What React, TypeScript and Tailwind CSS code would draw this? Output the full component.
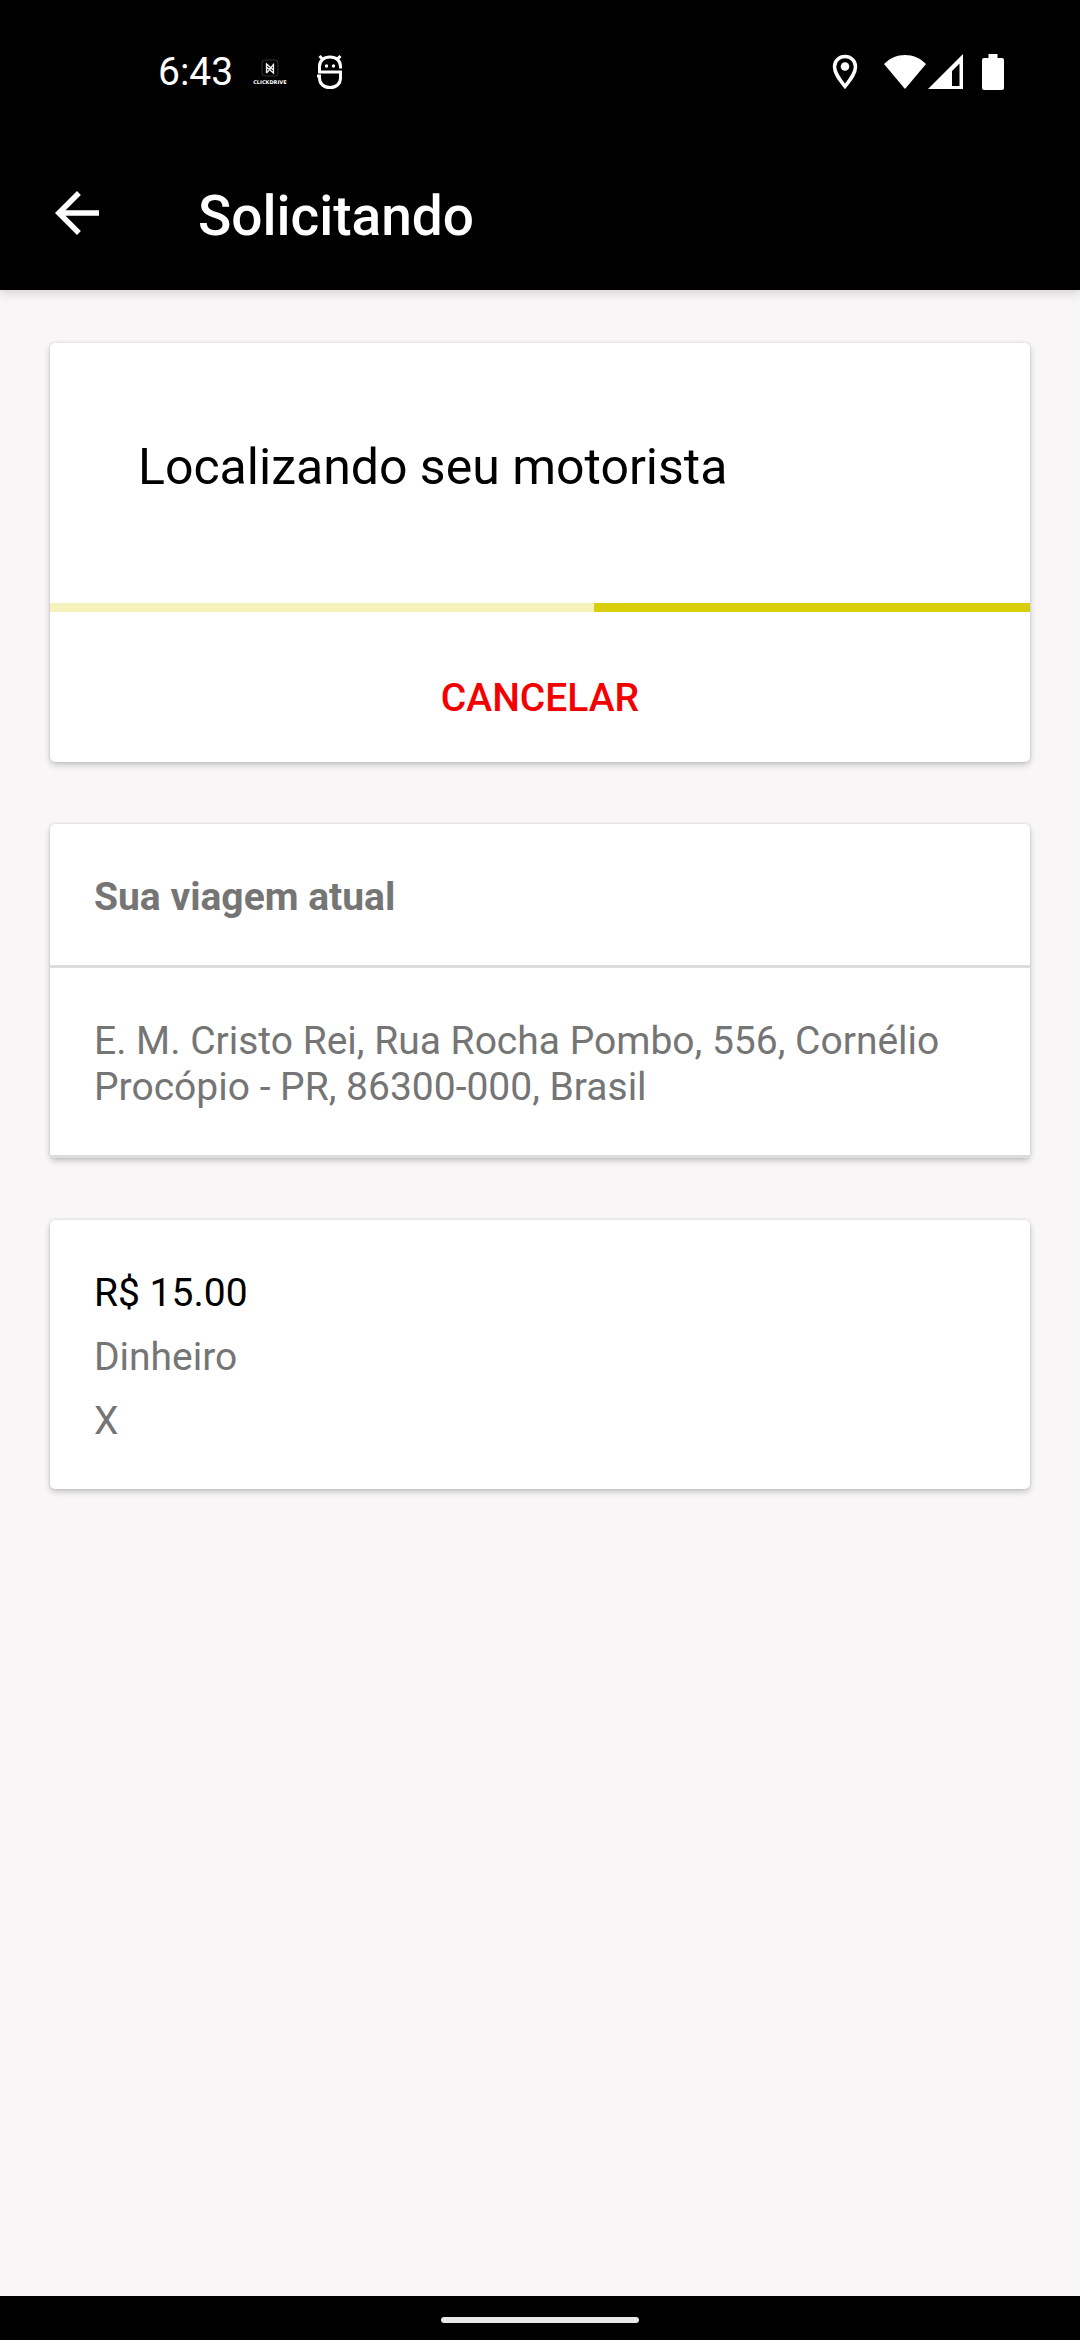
import React from 'react';

const tripAddress = 'E. M. Cristo Rei, Rua Rocha Pombo, 556, Cornélio Procópio - PR, 86300-000, Brasil';

const paymentDetails = ['Dinheiro', 'X'];

interface CardProps {
  children: React.ReactNode;
}

const Card: React.FC<CardProps> = ({ children }) => (
  <section className="bg-white rounded-[5px] overflow-hidden shadow-[0_3px_6px_rgba(0,0,0,0.2),0_0_3px_rgba(0,0,0,0.12)]">
    {children}
  </section>
);

const StatusBar: React.FC = () => (
  <div className="flex items-center justify-between h-[136px] pt-2 pl-[158px] pr-[76px] text-white">
    <div className="flex items-center">
      <span className="leading-[46px]">6:43</span>

      {/* Clickdrive notification */}
      <div className="flex flex-col items-center ml-5">
        <svg className="w-[18px] h-[18px]" viewBox="0 0 18 18" fill="none">
          <rect x="1" y="1" width="16" height="16" rx="3" stroke="#333" strokeWidth="1" />
          <path d="M5.5 14V5l7 6V4.5M5.5 14l7-8.5M5.5 5v3l7 6v-3" stroke="#eee" strokeWidth="1.3" />
        </svg>
        <span className="mt-0.5 text-[5px] leading-[6px] font-bold font-['DejaVu_Sans']">CLICKDRIVE</span>
      </div>

      <svg className="w-[26px] h-9 ml-[30px]" viewBox="0 0 26 36" fill="none" stroke="#fff" strokeWidth="3">
        <path d="M2.5 2l4 4M23.5 2l-4 4" />
        <path d="M23.5 14.5v-2C23.5 6.500 19 3 13 3S2.500 6.500 2.500 12.500V18h21v6c0 6-4.500 9.500-10.500 9.500S2.500 30 2.500 24v-2H0" />
        <circle cx="9.500" cy="12" r="1.700" fill="#fff" stroke="none" />
        <circle cx="16.500" cy="12" r="1.700" fill="#fff" stroke="none" />
      </svg>
    </div>

    <div className="flex items-center">
      <svg className="w-[26px] h-9" viewBox="0 0 26 36" fill="none">
        <path d="M13 2.500C7 2.500 2.500 7 2.500 12.800 2.500 19 7 25 13 32.500 19 25 23.500 19 23.500 12.800 23.500 7 19 2.500 13 2.500z" stroke="#fff" strokeWidth="3.500" />
        <circle cx="13" cy="12.500" r="4.300" fill="#fff" />
      </svg>
      <svg className="w-[42px] h-9 ml-[26px]" viewBox="0 0 42 36" fill="#fff">
        <path d="M0 10C6 4 13 1 21 1s15 3 21 9L21 35z" />
      </svg>
      <svg className="w-9 h-9 ml-0.5" viewBox="0 0 36 36" fill="#fff">
        <path fillRule="evenodd" d="M0 35L35 0v35zM24 32h7.500V9.500L24 17z" />
      </svg>
      <svg className="w-[22px] h-9 ml-[18px]" viewBox="0 0 22 36" fill="#fff">
        <path d="M6.500 0h9v4H20a2 2 0 0 1 2 2v28a2 2 0 0 1-2 2H2a2 2 0 0 1-2-2V6a2 2 0 0 1 2-2h4.500z" />
      </svg>
    </div>
  </div>
);

const App: React.FC = () => {
  return (
    <div className="min-h-screen flex flex-col bg-[#f8f6f7] font-[Roboto,sans-serif] text-[39px] leading-[46px] text-[#757575]">
      {/* Header */}
      <header className="bg-black text-white shadow-[0_3px_10px_rgba(0,0,0,0.15)]">
        <StatusBar />
        <div className="flex items-center h-[154px] px-11 gap-[88px]">
          <button type="button" aria-label="Voltar">
            <svg className="block w-[66px] h-[66px]" viewBox="0 0 24 24" fill="currentColor">
              <path d="M20 11H7.830l5.590-5.590L12 4l-8 8 8 8 1.410-1.410L7.830 13H20v-2z" />
            </svg>
          </button>
          <h1 className="pt-1.5 text-[55px] leading-[64px] font-medium">Solicitando</h1>
        </div>
      </header>

      <main className="flex-1 flex flex-col gap-[62px] px-[50px] pt-[53px] pb-[62px]">
        {/* Driver search */}
        <Card>
          <h2 className="pt-[94px] pb-[106px] px-[88px] text-[50px] leading-[60px] text-black">
            Localizando seu motorista
          </h2>
          <div className="flex h-[9px] bg-[#f6f2bc]" role="progressbar" aria-label="Localizando seu motorista">
            <div className="ml-auto w-[436px] bg-[#d9ce0b]" />
          </div>
          <button type="button" className="block w-full pt-[63px] pb-[41px] font-medium text-[#f40000]">
            CANCELAR
          </button>
        </Card>

        {/* Current trip */}
        <Card>
          <h2 className="px-11 pt-[50px] pb-[45px] font-bold border-b-3 border-[#dcdcdc]">Sua viagem atual</h2>
          <p className="px-11 pt-[50px] pb-[45px] border-b-3 border-[#dcdcdc]">{tripAddress}</p>
        </Card>

        {/* Payment */}
        <Card>
          <div className="flex flex-col gap-[18px] px-11 pt-[50px] pb-[45px]">
            <p className="text-black">R$ 15.00</p>
            {paymentDetails.map((detail) => (
              <p key={detail}>{detail}</p>
            ))}
          </div>
        </Card>
      </main>

      {/* Gesture bar */}
      <footer className="flex items-center justify-center h-11 pt-1 bg-black">
        <div className="w-[198px] h-1.5 rounded-full bg-[#e8e8e8]" />
      </footer>
    </div>
  );
};

export default App;
